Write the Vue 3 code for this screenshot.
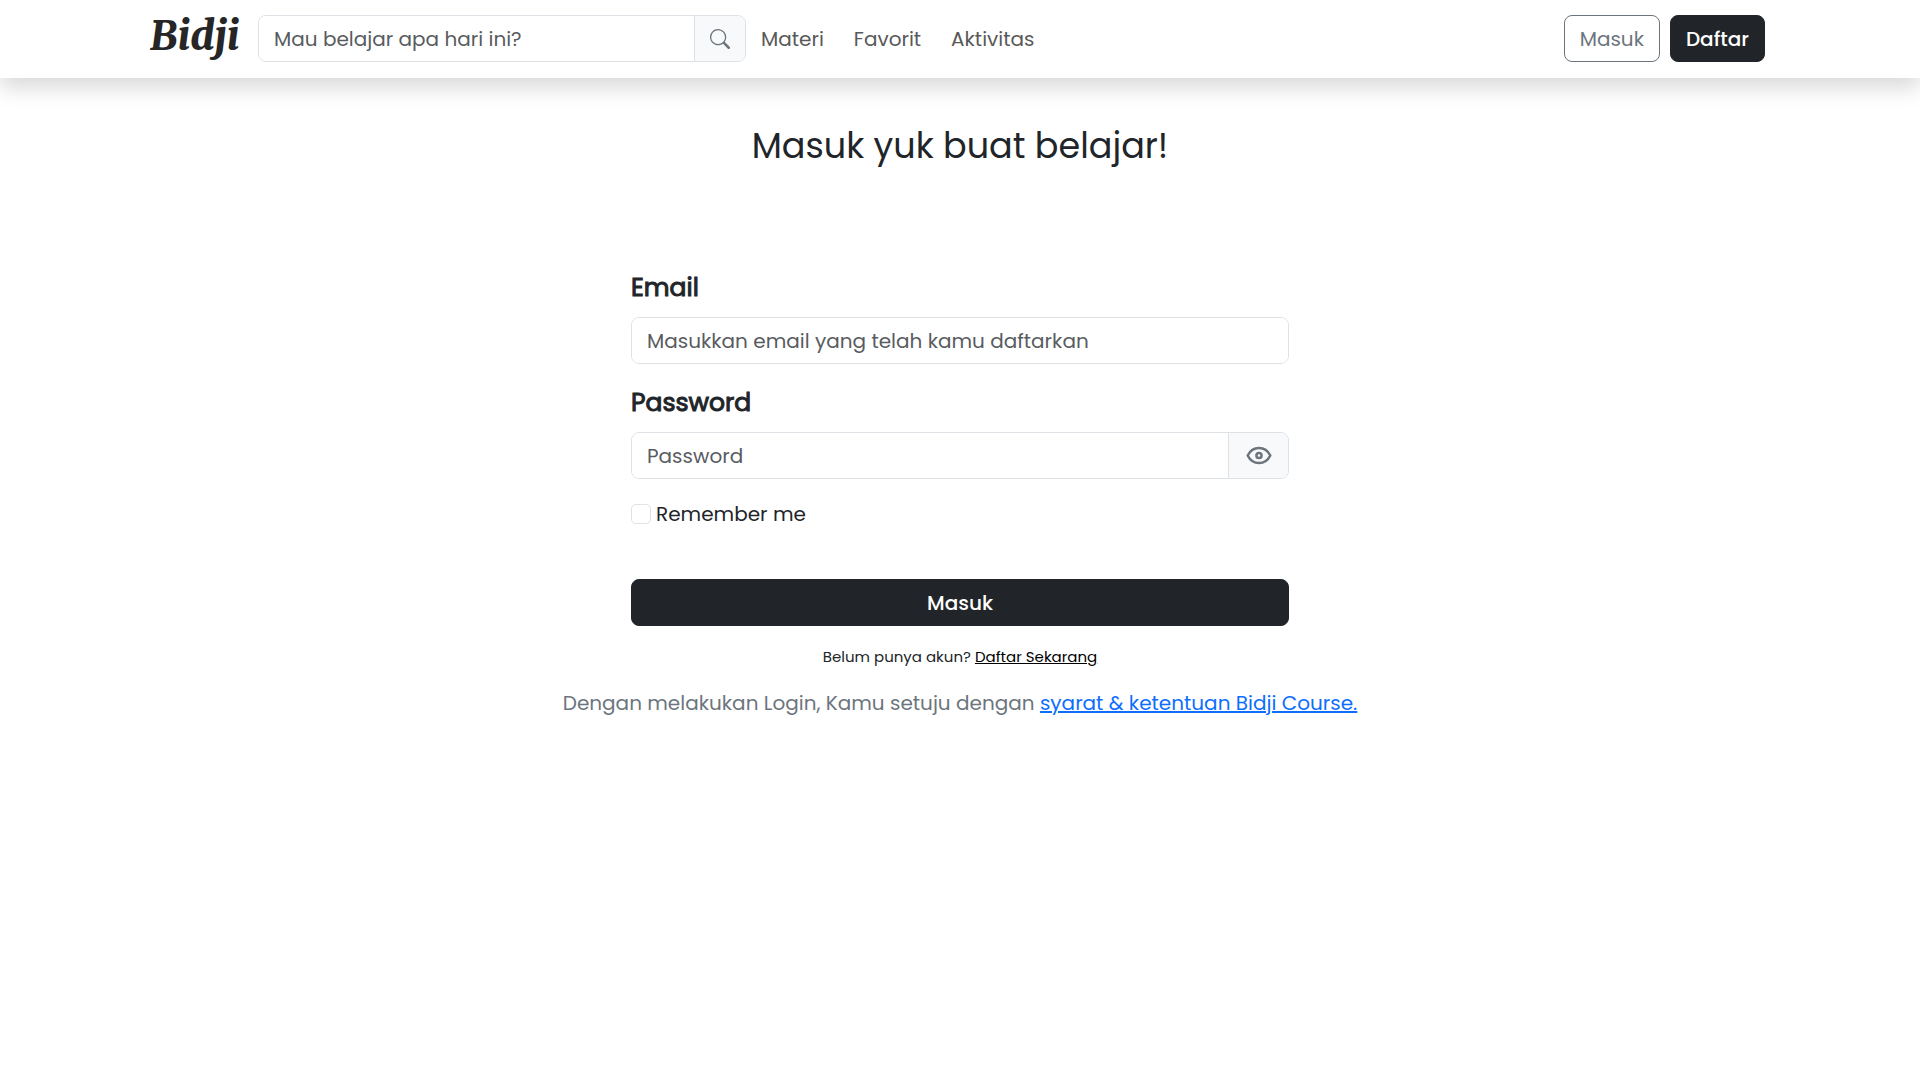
<script setup>
import { ref } from 'vue'

const search = ref('')
const email = ref('')
const password = ref('')
const remember = ref(false)
const showPassword = ref(false)
const links = ['Materi', 'Favorit', 'Aktivitas']
</script>

<template>
  <div class="page">
    <header class="navbar">
      <div class="container">
        <a class="brand" href="#">Bidji</a>
        <form class="group search" role="search" @submit.prevent>
          <input v-model="search" class="control" type="search" placeholder="Mau belajar apa hari ini?" aria-label="Cari materi" />
          <button class="addon" type="submit" aria-label="Cari">
            <svg width="20" height="20" viewBox="0 0 16 16" fill="currentColor" aria-hidden="true">
              <path d="M11.742 10.344a6.5 6.5 0 1 0-1.397 1.398h-.001c.03.04.062.078.098.115l3.85 3.85a1 1 0 0 0 1.415-1.414l-3.85-3.85a1.007 1.007 0 0 0-.115-.1zM12 6.5a5.5 5.5 0 1 1-11 0 5.5 5.5 0 0 1 11 0z" />
            </svg>
          </button>
        </form>
        <nav class="links">
          <a v-for="link in links" :key="link" href="#">{{ link }}</a>
        </nav>
        <div class="actions">
          <button class="btn outline" type="button">Masuk</button>
          <button class="btn dark" type="button">Daftar</button>
        </div>
      </div>
    </header>

    <main class="content">
      <h1>Masuk yuk buat belajar!</h1>
      <form class="login" @submit.prevent>
        <label class="label" for="email">Email</label>
        <div class="group">
          <input id="email" v-model="email" class="control" type="email" placeholder="Masukkan email yang telah kamu daftarkan" />
        </div>
        <label class="label" for="password">Password</label>
        <div class="group">
          <input id="password" v-model="password" class="control" :type="showPassword ? 'text' : 'password'" placeholder="Password" />
          <button class="addon eye" type="button" aria-label="Tampilkan password" @click="showPassword = !showPassword">
            <svg width="30" height="30" viewBox="0 0 30 30" fill="none" stroke="currentColor" stroke-width="2.500" aria-hidden="true">
              <path d="M3.700 14.500C6 9.800 10 7 15 7s9 2.800 11.300 7.500C24 19.200 20 22 15 22s-9-2.800-11.300-7.500z" stroke-linejoin="round" />
              <circle cx="15" cy="14.500" r="2.600" />
            </svg>
          </button>
        </div>
        <div class="remember">
          <input id="remember" v-model="remember" type="checkbox" />
          <label for="remember">Remember me</label>
        </div>
        <button class="btn dark" type="submit">Masuk</button>
      </form>
      <p class="register">Belum punya akun? <a href="#">Daftar Sekarang</a></p>
      <p class="terms">Dengan melakukan Login, Kamu setuju dengan <a href="#">syarat &amp; ketentuan Bidji Course.</a></p>
    </main>
  </div>
</template>

<style>
body {
  background: #fff;
}
</style>

<style scoped>
.page,
.page * {
  box-sizing: border-box;
}

.page {
  font-family: Poppins, Inter, sans-serif;
  font-size: 20px;
  font-weight: 400;
  line-height: 30px;
  color: #212529;
}

input,
button {
  font: inherit;
}

.navbar {
  position: relative;
  padding: 15px 0 16px;
  background: #fff;
  box-shadow: 0 10px 20px rgba(0, 0, 0, 0.15);
}

.container {
  display: flex;
  align-items: center;
  max-width: 1650px;
  margin: 0 auto;
  padding: 0 20px 0 15px;
}

.brand {
  width: 88px;
  height: 47px;
  margin-right: 20px;
  font-family: Merriweather, Lato, sans-serif;
  font-size: 40px;
  font-weight: 900;
  font-style: italic;
  line-height: 42px;
  color: #262626;
  text-decoration: none;
}

.group {
  display: flex;
  height: 47px;
  border: 1px solid #dee2e6;
  border-radius: 8px;
  overflow: hidden;
}

.search {
  width: 488px;
}

.control {
  flex: 1;
  min-width: 0;
  padding: 0 15px;
  border: 0;
  background: #fff;
  color: #212529;
  outline: none;
}

.control::placeholder {
  color: #595c5f;
  opacity: 1;
}

.addon {
  display: flex;
  align-items: center;
  justify-content: center;
  width: 51px;
  padding: 0;
  border: 0;
  border-left: 1px solid #dee2e6;
  background: #f8f9fa;
  color: #6c757d;
}

.eye {
  width: 60px;
}

.links {
  display: flex;
  gap: 30px;
  margin-left: 15px;
}

.links a {
  color: #595959;
  text-decoration: none;
}

.actions {
  display: flex;
  gap: 10px;
  margin-left: auto;
}

.btn {
  height: 47px;
  padding: 0 15px;
  border: 1px solid #212529;
  border-radius: 8px;
}

.outline {
  border-color: #6c757d;
  background: #fff;
  color: #6c757d;
}

.dark {
  background: #212529;
  color: #fff;
  font-weight: 500;
}

.content {
  display: flex;
  flex-direction: column;
  align-items: center;
  padding: 47px 15px 0;
}

h1 {
  margin: 0 0 102px;
  font-size: 35px;
  font-weight: 400;
  line-height: 42px;
}

.login {
  display: flex;
  flex-direction: column;
  width: 100%;
  max-width: 658px;
}

.label {
  margin-bottom: 10px;
  font-size: 25px;
  line-height: 38px;
  -webkit-text-stroke: 1px currentColor;
}

.login .group {
  margin-bottom: 20px;
}

.remember {
  display: flex;
  align-items: center;
  gap: 5px;
  margin-bottom: 50px;
}

.remember input {
  appearance: none;
  width: 20px;
  height: 20px;
  margin: 0;
  border: 1px solid #dee2e6;
  border-radius: 5px;
  background: #fff;
}

.remember input:checked {
  background: #212529;
}

.register {
  margin: 20px 0;
  font-size: 15px;
  line-height: 22px;
}

.register a {
  color: #000;
}

.terms {
  margin: 0;
  color: #6c757d;
}

.terms a {
  color: #0d6efd;
}
</style>
